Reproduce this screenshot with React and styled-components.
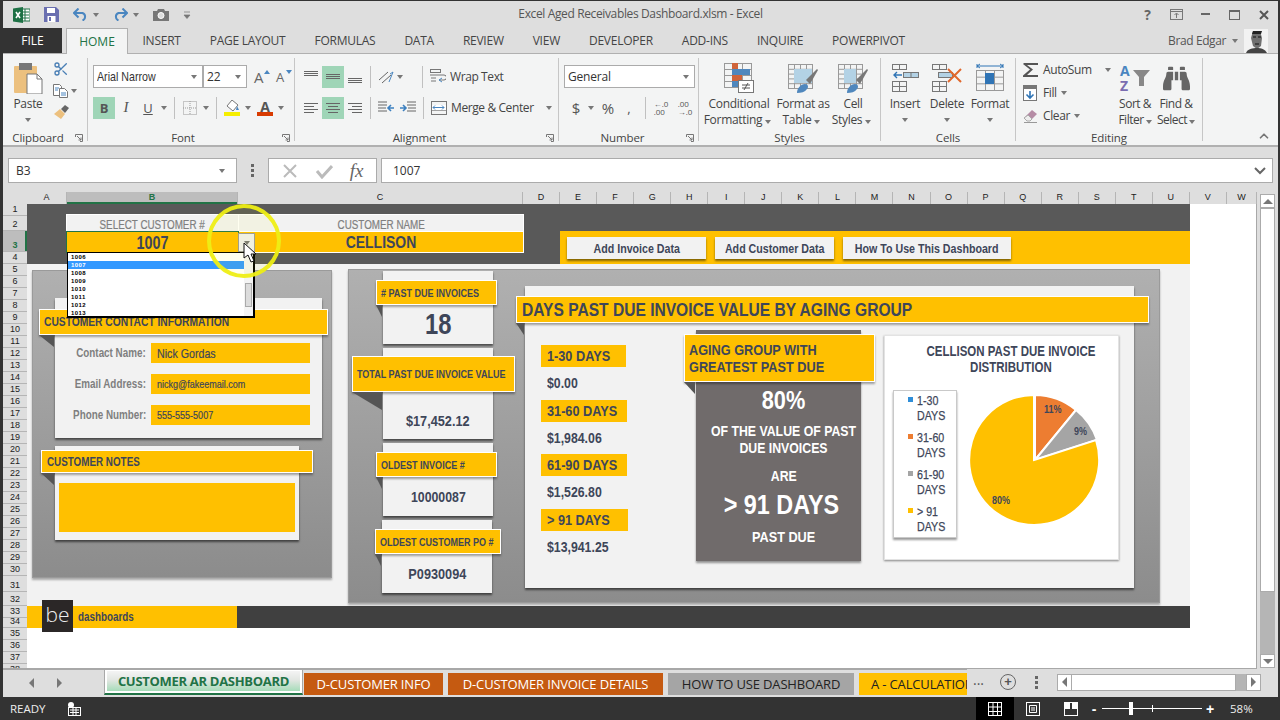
import React from 'react'
import styled, { createGlobalStyle } from 'styled-components'
import { Scissors, ChevronUp } from 'lucide-react'
import { FaBinoculars } from 'react-icons/fa'

const UI = `"Open Sans", "Noto Sans", sans-serif`
const SANS = `"Liberation Sans", Arial, sans-serif`
const AMBER = '#FFC000'
const INK = '#3E4659'

const Global = createGlobalStyle`
  html, body { margin: 0; padding: 0; background: #333; }
  * { box-sizing: border-box; }
`

// Arial Narrow is not installed, so squeeze Liberation Sans to its width
const N = styled.span`
  display: inline-block; white-space: nowrap; transform: scaleX(0.82);
  transform-origin: ${p => p.$o || 'left'} center;
`

const Win = styled.div`
  width: 1280px; height: 720px; overflow: hidden;
  background: #dedede; display: flex; flex-direction: column;
  border-top: 1px solid #333; border-left: 3px solid #333; border-right: 2px solid #333;
  font-family: ${UI}; color: #444;
`
const TitleBar = styled.div`
  height: 27px; display: grid; grid-template-columns: 1fr auto 1fr; align-items: center;
`
const Qat = styled.div`display: flex; align-items: center; gap: 14px; padding-left: 10px;`
const QatPair = styled.div`display: flex; align-items: center; gap: 5px;`
const Title = styled.div`font-size: 12px; color: #555; letter-spacing: -0.37px; padding-bottom: 2px;`
const WinBtns = styled.div`display: flex; justify-content: flex-end;`
const WinBtn = styled.div`width: 29px; height: 27px; display: flex; align-items: center; justify-content: center; color: #666; font-weight: 700; font-size: 14px;`

const Tabs = styled.div`display: flex; height: 25px; align-items: stretch; position: relative; z-index: 1;`
const FileTab = styled.div`width: 59px; margin-right: 4px; background: #333; color: #fff; font-size: 12px; display: flex; align-items: center; justify-content: center;`
const HomeTab = styled.div`
  width: 62px; margin-bottom: -1px; background: #f3f4f4; color: #217346; font-size: 12px;
  border: 1px solid #b0b0b0; border-bottom: 0; display: flex; align-items: center; justify-content: center;
`
const Tab = styled.div`padding: 0 14.5px; font-size: 12px; letter-spacing: -0.25px; display: flex; align-items: center; color: #444;`
const User = styled.div`margin-left: auto; display: flex; align-items: center; padding-right: 10px; font-size: 12px; letter-spacing: -0.4px; gap: 6px; color: #555;`
const Avatar = styled.svg`width: 24px; height: 24px; display: block;`

const Ribbon = styled.div`
  height: 94px; display: flex; background: #f3f4f4;
  border-top: 1px solid #b0b0b0; border-bottom: 2px solid #b0b0b0; position: relative;
`
const Group = styled.div`
  width: ${p => p.$w}px; flex: none; margin: 4px 0 4px; display: flex; flex-direction: column;
  border-right: 1px solid #c6c6c6; position: relative;
`
const GroupBody = styled.div`flex: 1; display: flex; min-height: 0; padding-left: ${p => p.$pl || 0}px;`
const GroupLabel = styled.div`height: 18px; margin-bottom: -6px; text-align: center; font-size: 11.5px; color: #444; line-height: 18px; letter-spacing: -0.1px; padding-right: ${p => p.$pr || 0}px;`
const Launcher = styled.svg`position: absolute; right: 4px; bottom: -1px; width: 8px; height: 8px;`
const Collapse = styled.div`position: absolute; right: 7px; bottom: 2px; color: #777; line-height: 0;`
const Stack = styled.div`display: flex; flex-direction: column; gap: ${p => p.$gap ?? 8}px; padding: ${p => p.$pad || '7px 0 0 5px'}; width: ${p => (p.$w ? `${p.$w}px` : 'auto')}; flex: none;`
const Line = styled.div`display: flex; align-items: center; height: 23px; flex: none;`
const Btn = styled.div`
  width: ${p => p.$w || 22}px; height: 22px; flex: none; display: flex; align-items: center; justify-content: center;
  margin-left: ${p => p.$ml || 0}px;
  background: ${p => (p.$on ? '#9fd5b7' : 'transparent')}; font-size: ${p => p.$fs || 13}px; line-height: ${p => p.$lh || 'normal'}; color: #555;
`
const SerifI = styled.i`font-family: "Liberation Serif", serif; font-size: 15px;`
const Caret = styled.span`
  display: inline-block; flex: none; width: 0; height: 0; margin: ${p => p.$m || '0 3px'};
  border-left: 3.5px solid transparent; border-right: 3.5px solid transparent; border-top: 4px solid #777;
`
const VSep = styled.div`width: 1px; height: 22px; background: #c0c0c0; margin: 0 ${p => p.$r ?? 7}px 0 ${p => p.$l ?? 7}px; flex: none;`
const Select = styled.div`
  width: ${p => p.$w}px; height: 23px; background: #fff; border: 1px solid #ababab; margin-right: ${p => p.$mr || 0}px; flex: none;
  display: flex; align-items: center; justify-content: space-between; padding: 0 2px 0 3px; font-size: 12px; color: #333; letter-spacing: -0.2px;
`
const SelectFace = styled.span`font-family: ${SANS}; font-size: 13px; letter-spacing: 0; display: inline-block; white-space: nowrap; transform: scaleX(0.82); transform-origin: left center;`
const Big = styled.div`
  width: ${p => p.$w}px; flex: none; display: flex; flex-direction: column; align-items: center; padding-top: 4px; white-space: nowrap;
  font-size: 12px; line-height: 16px; color: #444; letter-spacing: ${p => p.$ls ?? -0.3}px; text-align: center;
`
const BigIcon = styled.div`height: 32px; margin-bottom: 2px; display: flex; align-items: center; justify-content: center;`
const WideRow = styled.div`display: flex; align-items: center; gap: 4px; font-size: 12px; letter-spacing: -0.4px; height: 23px; white-space: nowrap; flex: none;`
const CopyRow = styled.div`display: flex; align-items: center;`

const FormulaRow = styled.div`display: flex; align-items: center; height: 25px; margin: 11px 0 9px 5px;`
const NameBox = styled.div`width: 229px; height: 25px; background: #fff; border: 1px solid #ababab; display: flex; align-items: center; justify-content: space-between; padding: 0 8px 0 7px; font-size: 12px; color: #333;`
const BarDots = styled.div`width: 31px; display: flex; justify-content: center;`
const FxBox = styled.div`width: 109px; height: 25px; background: #fff; border: 1px solid #ababab; display: flex; align-items: center; justify-content: space-around; padding: 0 4px;`
const Fx = styled.span`font-family: "Liberation Serif", serif; font-style: italic; font-size: 19px; color: #666;`
const Input = styled.div`flex: 1; margin: 0 5px 0 4px; height: 25px; background: #fff; border: 1px solid #ababab; display: flex; align-items: center; justify-content: space-between; padding: 0 6px 0 11px; font-size: 12px; color: #333;`

const SheetWrap = styled.div`flex: 1; display: flex; min-height: 0;`
const SheetMain = styled.div`width: 1254px; display: flex; flex-direction: column; border-right: 1px solid #a8a8a8; border-bottom: 1px solid #a8a8a8;`
const ColHead = styled.div`display: flex; height: 12px; background: #dedede; flex: none;`
const Corner = styled.div`width: 24px; flex: none;`
const Col = styled.div`
  width: ${p => p.$w}px; flex: none; border-right: 1px solid #b5b5b5; font: ${p => (p.$on ? 'bold' : 'normal')} 9px/11px ${SANS};
  text-align: center; color: ${p => (p.$on ? '#217346' : '#222')}; background: ${p => (p.$on ? '#bdbdbd' : 'transparent')};
  box-shadow: ${p => (p.$on ? 'inset 0 -2px 0 #217346' : 'none')}; overflow: hidden;
`
const SheetBody = styled.div`flex: 1; display: flex; min-height: 0; overflow: hidden;`
const RowHead = styled.div`width: 24px; flex: none; background: #dedede; overflow: hidden;`
const RowNum = styled.div`
  height: ${p => p.$h}px; border-bottom: 1px solid #b5b5b5; font: ${p => (p.$on ? 'bold' : 'normal')} 9px/11px ${SANS};
  display: flex; align-items: flex-end; justify-content: center; color: ${p => (p.$on ? '#217346' : '#222')}; background: ${p => (p.$on ? '#bdbdbd' : 'transparent')};
  box-shadow: ${p => (p.$on ? 'inset -2px 0 0 #217346' : 'none')};
`
const Canvas = styled.div`flex: 1; background: #fff; overflow: hidden;`
const Dash = styled.div`width: 1163px; font-family: ${SANS}; font-weight: 700; color: ${INK};`

const Band = styled.div`height: 60px; background: #595959; display: flex; align-items: flex-end;`
const Selector = styled.div`
  width: 458px; height: 39px; margin: 0 0 11px 39px; flex: none; position: relative; align-self: flex-end;
  background: #fff; padding: 1px; display: grid; grid-template-columns: 171px 1fr; grid-template-rows: 16px 20px; gap: 1px;
`
const SelLabel = styled.div`background: #f2f2f2; color: #7f7f7f; font-size: 12px; text-align: center; line-height: 20px; height: 16px; font-weight: 400; -webkit-text-stroke: 0.2px #7f7f7f;`
const SelValue = styled.div`background: ${AMBER}; font-size: ${p => p.$fs}px; line-height: 22px; height: 20px; text-align: center; position: relative; box-shadow: ${p => (p.$sel ? '0 0 0 1px #217346' : 'none')};`
const DropBtn = styled.div`position: absolute; left: 172px; top: 19px; width: 17px; height: 19px; background: #f0f0f0; border: 1px solid #999; display: flex; align-items: center; justify-content: center;`
const Drop = styled.div`position: absolute; left: 1px; top: 38px; width: 188px; height: 66px; background: #fff; border: 1px solid #000; border-width: 1px 2px 2px 1px; z-index: 5; overflow: hidden;`
const DropItem = styled.div`height: 8px; font: bold 6px/8px ${SANS}; letter-spacing: 0.4px; padding-left: 3px; margin-right: 9px; color: ${p => (p.$on ? '#fff' : '#000')}; background: ${p => (p.$on ? '#3399ff' : '#fff')};`
const DropBar = styled.div`position: absolute; right: 0; top: 0; bottom: 0; width: 9px; background: #f4f4f4;`
const DropThumb = styled.div`position: absolute; left: 1px; top: 30px; width: 7px; height: 24px; background: #dcdcdc; border: 1px solid #aaa;`
const Ring = styled.div`position: absolute; left: 141px; top: -10px; width: 74px; height: 74px; border-radius: 50%; border: 4px solid rgba(238,238,20,0.95); background: rgba(255,255,0,0.06); z-index: 6; pointer-events: none;`
const Pointer = styled.svg`position: absolute; left: 177px; top: 28px; width: 15px; height: 22px; z-index: 7;`

const Strip = styled.div`flex: 1; height: 33px; margin-left: 36px; background: ${AMBER}; display: flex; gap: 9px; padding: 6px 0 0 7px; align-items: flex-start;`
const StripBtn = styled.div`width: ${p => p.$w}px; height: 22px; background: #f2f2f2; box-shadow: 0 2px 2px rgba(90,70,0,.75); font-size: 13px; display: flex; align-items: center; justify-content: center;`

const Page = styled.div`height: 342px; background: #f2f2f2; display: flex; align-items: flex-start; padding-left: 5px;`
const Panel = styled.div`
  width: ${p => p.$w}px; height: ${p => p.$h}px; margin: ${p => p.$m}; flex: none;
  background: linear-gradient(#b0b0b0, #8c8c8c); border: 1px solid #9a9a9a; box-shadow: 0 2px 2px rgba(0,0,0,.3);
`
const LeftPanel = styled(Panel)`padding: 27px 0 0 22px; display: flex; flex-direction: column; gap: 8px;`
const RightPanel = styled(Panel)`padding: 1px 0 0 34px; display: flex;`
const Card = styled.div`
  width: ${p => p.$w}px; height: ${p => p.$h}px; background: ${p => p.$bg || '#f2f2f2'}; flex: none; margin-left: ${p => p.$ml || 0}px;
  padding-top: ${p => p.$pt}px; display: flex; flex-direction: column; box-shadow: 0 2px 2px rgba(0,0,0,.55);
`
const Callout = styled.div`
  height: ${p => p.$h}px; margin: 0 -${p => p.$r}px 0 -${p => p.$l}px; flex: none; position: relative; z-index: 2; color: ${INK};
  background: ${AMBER}; border: 1px solid #fff; box-shadow: 0 2px 2px rgba(0,0,0,.35); text-align: left;
  display: flex; align-items: center; padding-left: ${p => p.$pl || 4}px; font-size: ${p => p.$fs}px; line-height: ${p => p.$lh || 'normal'};
  &::after {
    content: ''; position: absolute; left: -1px; top: 100%; margin-top: 1px; width: 0; height: 0;
    border-top: ${p => p.$fold || 12}px solid #555; border-left: ${p => p.$l - 1}px solid transparent;
  }
`
const Fields = styled.div`display: flex; flex-direction: column; gap: 11px; padding-top: 8px;`
const Field = styled.div`display: flex; align-items: center;`
const FieldLabel = styled.div`width: 96px; padding-right: 5px; text-align: right; font-size: 12px; color: #7f7f7f; white-space: nowrap;`
const FieldValue = styled.div`width: 159px; height: 20px; background: ${AMBER}; padding-left: 6px; font-size: ${p => p.$fs || 12}px; line-height: 21px; font-weight: 400; -webkit-text-stroke: 0.2px ${INK};`
const NotesBox = styled.div`height: 49px; margin: 10px 4px 0; background: ${AMBER};`

const KpiCol = styled.div`width: 110px; flex: none; display: flex; flex-direction: column; gap: 4px;`
const KpiValue = styled.div`flex: 1; display: flex; align-items: center; justify-content: center; font-size: ${p => p.$fs}px; padding: ${p => p.$pad || 0};`

const Main = styled(Card)`margin: 15px 0 0 32px;`
const MainBody = styled.div`display: flex; align-items: flex-start; flex: 1;`
const DaysCol = styled.div`width: 171px; padding: 22px 0 0 16px; flex: none;`
const DayRow = styled.div`height: 54.6px;`
const DayChip = styled.div`width: ${p => p.$w}px; height: 22px; background: ${AMBER}; padding-left: 6px; font-size: 15.5px; line-height: 22px;`
const DayVal = styled.div`padding: 7px 0 0 6px; font-size: 15px; line-height: 17px;`
const GrayPanel = styled.div`width: 165px; height: 231px; margin-top: 7px; padding-top: 4px; background: #706b6b; flex: none; box-shadow: 0 2px 2px rgba(0,0,0,.4); display: flex; flex-direction: column; color: #fff;`
const GrayText = styled.div`display: flex; flex-direction: column; align-items: center; text-align: center; padding-left: 10px;`
const GrayLine = styled.div`width: max-content; font-size: ${p => p.$fs}px; line-height: ${p => p.$lh}px; margin-top: ${p => p.$mt || 0}px; margin-right: ${p => p.$mr || 0}px;`
const Chart = styled.div`width: 235px; height: 225px; margin: 12px 0 0 23px; flex: none; background: #fff; border: 1px solid #e3e3e3; box-shadow: 0 1px 2px rgba(0,0,0,.45);`
const ChartTitle = styled.div`font-size: 14px; line-height: 16px; text-align: center; padding: 7px 0 0 18px;`
const ChartBody = styled.div`display: flex; padding: 15px 0 0 8px;`
const Legend = styled.div`width: 64px; height: 148px; flex: none; border: 1px solid #c9c9c9; box-shadow: 0 2px 2px rgba(0,0,0,.4); padding: 2px 0 0 14px; display: flex; flex-direction: column; gap: 7px;`
const LegendItem = styled.div`display: flex; gap: 4px; font-size: 13px; line-height: 15px; font-weight: 400; -webkit-text-stroke: 0.25px ${INK};`
const Swatch = styled.i`width: 5px; height: 5px; margin-top: 4px; flex: none; background: ${p => p.$c};`
const Pie = styled.svg`width: 140px; height: 140px; margin: 0 0 0 7px; flex: none; display: block;`
const PieLabel = styled.text`font-family: ${SANS}; font-size: 11px; font-weight: 700; fill: ${INK};`

const Footer = styled.div`height: 22px; background: #404040; display: flex;`
const FootAmber = styled.div`width: 210px; background: ${AMBER}; display: flex; align-items: center; padding-left: 15px; overflow: visible;`
const BeLogo = styled.div`width: 31px; height: 32px; margin-top: -6px; margin-bottom: -4px; background: #2b2727; color: #eee; font: 300 21px/28px "Open Sans", sans-serif; text-align: center; flex: none; position: relative;`
const FootText = styled.div`margin-left: 5px; font-size: 12px;`

const VScroll = styled.div`width: 21px; flex: none; padding: 2px 3px 1px 3px; display: flex; flex-direction: column;`
const ScrollBtn = styled.div`height: 14px; flex: none; background: #fff; border: 1px solid #ababab; display: flex; align-items: center; justify-content: center;`
const ScrollThumb = styled.div`flex: 1; background: #fff; border: 1px solid #ababab;`
const ScrollRest = styled.div`height: 62px; flex: none; background: #b5b5b5;`
const Tri = styled.span`
  width: 0; height: 0; display: block;
  ${p => p.$dir === 'up' && 'border-left:5px solid transparent;border-right:5px solid transparent;border-bottom:5px solid #777;'}
  ${p => p.$dir === 'down' && 'border-left:5px solid transparent;border-right:5px solid transparent;border-top:5px solid #777;'}
  ${p => p.$dir === 'left' && 'border-top:5px solid transparent;border-bottom:5px solid transparent;border-right:5px solid #777;'}
  ${p => p.$dir === 'right' && 'border-top:5px solid transparent;border-bottom:5px solid transparent;border-left:5px solid #777;'}
`

const TabBar = styled.div`height: 28px; flex: none; display: flex; align-items: flex-start; font-size: 13px;`
const TabNav = styled.div`width: 101px; height: 26px; flex: none; display: flex; gap: 23px; align-items: center; padding-left: 26px; border-top: 1px solid #a8a8a8;`
const ActiveTab = styled.div`
  width: 199px; height: 26px; flex: none; background: #fff; border: 1px solid #a8a8a8; border-bottom: 2px solid #217346; border-top-width: 1px; padding: 1px 2px 2px 2px;
`
const ActiveInner = styled.div`
  height: 100%; background: linear-gradient(#f4f4f4 0%, #e2e6e2 45%, #a6dcb9 100%); color: #217346; font-weight: 700; font-size: 13px;
  display: flex; align-items: center; justify-content: center; letter-spacing: -0.3px;
`
const SheetTabs = styled.div`display: flex; flex: none; gap: 5px; padding: 3px 0 0 1px; border-top: 1px solid #a8a8a8; height: 26px;`
const SheetTab = styled.div`
  width: ${p => p.$w}px; height: 22px; background: ${p => p.$bg}; color: ${p => p.$fg}; overflow: hidden; white-space: nowrap;
  padding-left: ${p => p.$pl || 0}px; display: flex; align-items: center; justify-content: ${p => (p.$pl ? 'flex-start' : 'center')}; letter-spacing: -0.15px;
`
const TabTail = styled.div`flex: 1; display: flex; align-items: center; height: 26px; color: #555;`
const More = styled.div`width: 28px; padding-left: 6px; font-size: 14px; line-height: 16px; height: 20px;`
const Plus = styled.div`width: 16px; height: 16px; margin: 0 0 0 5px; border: 1.5px solid #666; border-radius: 50%; color: #555; font: 700 13px/13px ${SANS}; text-align: center;`
const TabDots = styled.div`width: 40px; display: flex; justify-content: center;`
const HScroll = styled.div`width: 204px; height: 17px; display: flex; margin-left: 1px;`
const HBtn = styled.div`width: 15px; background: #fff; border: 1px solid #ababab; display: flex; align-items: center; justify-content: center;`
const HThumb = styled.div`flex: 1; background: #fff; border: 1px solid #ababab; border-left: 0;`
const HRest = styled.div`width: 10px; background: #b5b5b5;`

const Status = styled.div`height: 23px; flex: none; background: #333; margin-left: -3px; margin-right: -2px; display: flex; align-items: center; color: #eee; font-size: 11.5px; padding-left: 10px;`
const Macro = styled.svg`width: 14px; height: 14px; margin-left: 21px;`
const StatusRight = styled.div`margin-left: auto; display: flex; align-items: center; height: 100%;`
const ViewBtn = styled.div`width: 38px; height: 100%; display: flex; align-items: center; justify-content: center; background: ${p => (p.$on ? '#000' : 'transparent')};`
const ZoomSign = styled.span`font: bold 14px ${SANS}; color: #fff; width: 8px; text-align: center;`
const Slider = styled.div`width: 100px; height: 1px; background: #fff; margin: 0 4px; position: relative;`
const SliderThumb = styled.i`position: absolute; left: 27px; top: -6px; width: 4px; height: 13px; background: #fff;`
const SliderTick = styled.i`position: absolute; left: 50px; top: -3px; width: 1px; height: 7px; background: #fff;`
const ZoomPct = styled.div`width: 66px; padding-left: 16px; color: #eee; font-size: 11.5px;`

// ---- drawings ----
const Cells = ({ x, y, w, h, cols = 1, rows = 1, s = '#777' }) => {
  const out = [<rect key="b" x={x + 0.5} y={y + 0.5} width={w} height={h} fill="none" stroke={s} />]
  for (let i = 1; i < cols; i++) out.push(<path key={'c' + i} d={`M${x + 0.5 + (i * w) / cols} ${y}v${h}`} stroke={s} />)
  for (let i = 1; i < rows; i++) out.push(<path key={'r' + i} d={`M${x} ${y + 0.5 + (i * h) / rows}h${w}`} stroke={s} />)
  return <>{out}</>
}
const IcoSvg = styled.svg`display: block; flex: none; transform: ${p => (p.$flip ? 'scaleX(-1)' : 'none')};`
const Ico = ({ w = 16, h = 16, flip, children }) => <IcoSvg $flip={flip} width={w} height={h} viewBox={`0 0 ${w} ${h}`}>{children}</IcoSvg>

const VDots = () => (
  <Ico w={3} h={13}><rect width="3" height="3" fill="#666" /><rect y="5" width="3" height="3" fill="#666" /><rect y="10" width="3" height="3" fill="#666" /></Ico>
)
const LogoIcon = () => (
  <Ico w={17} h={16}>
    <rect x="6" y="2" width="11" height="12" fill="#fff" stroke="#1e7145" />
    <path d="M9 5h7M9 8h7M9 11h7M12 2v12" stroke="#1e7145" />
    <path d="M0 1.500 10 0v16L0 14.500z" fill="#1e7145" />
    <path d="M3 5l4 6M7 5l-4 6" stroke="#fff" strokeWidth="1.6" />
  </Ico>
)
const SaveIcon = () => (
  <Ico w={15} h={15}>
    <path d="M0 0h12l3 3v12H0z" fill="#6a6fb0" />
    <rect x="3" y="1" width="8" height="5" fill="#fff" />
    <rect x="3.5" y="9" width="8" height="6" fill="#fff" />
    <rect x="5" y="10" width="2" height="4" fill="#6a6fb0" />
  </Ico>
)
const UndoIcon = ({ flip }) => (
  <Ico w={15} h={13} flip={flip}>
    <path d="M1.500 5h8a4 4 0 0 1 0 7.500" fill="none" stroke="#4a86c0" strokeWidth="2" />
    <path d="M5.500 .5 1 5l4.500 4.500" fill="none" stroke="#4a86c0" strokeWidth="2" />
  </Ico>
)
const CameraIcon = () => (
  <Ico w={16} h={13}>
    <path d="M0 3h4l1-2h6l1 2h4v10H0z" fill="#777" />
    <circle cx="8" cy="7.5" r="3" fill="#ddd" stroke="#fff" />
  </Ico>
)
const PasteIcon = () => (
  <Ico w={30} h={32}>
    <rect x="1" y="4" width="23" height="27" rx="1" fill="#ecc07e" />
    <rect x="6" y="1" width="13" height="7" fill="#777" />
    <path d="M14 12h10l5 5v15H14z" fill="#fff" stroke="#777" />
    <path d="M24 12v5h5" fill="none" stroke="#777" />
  </Ico>
)
const CopyIcon = () => (
  <Ico w={15} h={14}>
    <path d="M.5.5h6l2 2v9h-8z" fill="#fff" stroke="#777" />
    <path d="M6.500 4.500h5l3 3v6h-8z" fill="#fff" stroke="#777" />
    <path d="M2 4h4M2 6h3M8 9h5M8 11h5" stroke="#4a86c0" />
  </Ico>
)
const BrushIcon = () => (
  <Ico w={16} h={14}>
    <path d="M1 9 7 4l5 5-4 5z" fill="#ecc07e" />
    <path d="M8 4l4-4 4 3-4 5z" fill="#666" />
  </Ico>
)
const LinesIcon = ({ rows }) => (
  <Ico w={14} h={14}>
    {rows.map(([y, x, len], i) => <path key={i} d={`M${x} ${y}.5h${len}`} stroke="#666" />)}
  </Ico>
)
const FontGlyph = styled.span`position: relative; display: block; width: 16px; height: 16px; font-size: ${p => p.$fs}px; line-height: 17px; color: #666;`
const FontArrow = styled.svg`position: absolute; right: 0; top: 1px;`
const FontUp = ({ up }) => (
  <FontGlyph $fs={up ? 15 : 13}>
    A
    <FontArrow width="6" height="4" viewBox="0 0 6 4"><path d={up ? 'M0 4 3 0l3 4z' : 'M0 0l3 4 3-4z'} fill="#4a86c0" /></FontArrow>
  </FontGlyph>
)
const BordersIcon = () => (
  <Ico w={14} h={14}><rect x=".5" y=".5" width="13" height="13" fill="none" stroke="#999" strokeDasharray="1 1" /><path d="M7 0v14M0 7h14" stroke="#999" strokeDasharray="1 1" /></Ico>
)
const FillIcon = () => (
  <Ico w={16} h={16}>
    <path d="M8 0l6 5-5 6-6-5z" fill="#fff" stroke="#777" />
    <path d="M13 6l2 4h-3z" fill="#4a86c0" />
    <rect y="12" width="16" height="4" fill="#f5ee00" />
  </Ico>
)
const ColorGlyph = styled.span`position: relative; display: block; width: 16px; height: 16px; text-align: center; font: bold 14px/13px ${UI}; color: #555;`
const ColorBar = styled.i`position: absolute; left: 0; bottom: 0; width: 16px; height: 4px; background: #d83b01;`
const FontColorIcon = () => <ColorGlyph>A<ColorBar /></ColorGlyph>
const OrientIcon = () => (
  <Ico w={16} h={16}><path d="M1 11 10 3M4 14l9-8" stroke="#666" /><path d="M11 13 15 3l-3 2" fill="none" stroke="#4a86c0" /></Ico>
)
const IndentIcon = ({ flip }) => (
  <Ico w={16} h={13} flip={flip}>
    <path d="M7 1h9M7 4h9M8 7h8M7 10h9" stroke="#666" />
    <path d="M0 7h5M3 4l3 3-3 3" fill="none" stroke="#3d80c0" strokeWidth="1.6" />
  </Ico>
)
const WrapIcon = () => (
  <Ico w={16} h={15}><rect x=".5" y=".5" width="10" height="3" fill="none" stroke="#777" /><path d="M0 6h14a2 2 0 0 1 0 5H9" fill="none" stroke="#777" /><path d="M1 9h5M1 12h5" stroke="#777" /><path d="M12 9l-3 2 3 2" fill="none" stroke="#4a86c0" /></Ico>
)
const MergeIcon = () => (
  <Ico w={16} h={14}><Cells x={0} y={0} w={15} h={13} rows={3} /><rect x="1" y="4" width="14" height="5" fill="#fff" /><path d="M2 6.500h11M4 4.500l-2 2 2 2M11 4.500l2 2-2 2" fill="none" stroke="#4a86c0" /></Ico>
)
const CondIcon = () => (
  <Ico w={30} h={30}>
    <Cells x={0} y={0} w={27} h={24} cols={3} rows={4} s="#999" />
    <rect x="8" y="0" width="6" height="6" fill="#d0643a" />
    <rect x="8" y="6" width="18" height="6" fill="#4f87bd" />
    <rect x="8" y="12" width="10" height="6" fill="#d0643a" />
    <rect x="8" y="18" width="6" height="6" fill="#4f87bd" />
    <rect x="14.5" y="17.5" width="15" height="12" fill="#fff" stroke="#777" />
    <path d="M18 22h8M18 25h8M24 20l-4 7" stroke="#555" />
  </Ico>
)
const TableIcon = ({ styleOnly }) => (
  <Ico w={30} h={30}>
    <Cells x={0} y={1} w={24} h={24} cols={4} rows={5} s="#999" />
    <rect x="6" y="6" width={styleOnly ? 12 : 18} height="14" fill="#b3d2e5" />
    <path d="M18 17 29 6l1 1-8 14z" fill="#777" />
    <path d="M9 30c0-5 4-9 8-9 3 0 4 3 2 5-2 3-6 4-10 4z" fill="#4f87bd" />
  </Ico>
)
const InsertIcon = () => (
  <Ico w={27} h={28}>
    <Cells x={0} y={0} w={14} h={5} cols={2} />
    <rect x="11.5" y="8.5" width="15" height="5" fill="#b3d2e5" stroke="#777" /><path d="M19 8v6" stroke="#777" />
    <path d="M2 11h8M5 8l-3 3 3 3" fill="none" stroke="#2f74b5" strokeWidth="1.4" />
    <Cells x={0} y={17} w={14} h={10} cols={2} rows={2} />
  </Ico>
)
const DeleteIcon = () => (
  <Ico w={30} h={28}>
    <Cells x={0} y={0} w={14} h={5} cols={2} />
    <rect x="6.5" y="8.5" width="14" height="5" fill="#b3d2e5" stroke="#777" />
    <Cells x={0} y={17} w={14} h={10} cols={2} rows={2} />
    <path d="M16 5l13 13M29 5 16 18" stroke="#e0682c" strokeWidth="2" />
  </Ico>
)
const FormatIcon = () => (
  <Ico w={28} h={30}>
    <path d="M1 3h26M1 1v4M27 1v4M4 1 1 3l3 2M24 1l3 2-3 2" fill="none" stroke="#2f74b5" />
    <Cells x={0} y={7} w={27} h={20} cols={3} rows={3} s="#999" />
    <rect x="9" y="10" width="9" height="11" fill="#2f74b5" />
  </Ico>
)
const SigmaIcon = () => (
  <Ico w={16} h={15}><path d="M1 1h14v2H4l6 4.500L4 13h11v2H0v-1.500L7 7.500 0 2z" fill="#555" /></Ico>
)
const FillDownIcon = () => (
  <Ico w={16} h={16}><rect x=".5" y=".5" width="13" height="15" fill="#fff" stroke="#777" /><rect width="14" height="4" fill="#777" /><path d="M7 6v7M3.500 9.500 7 13l3.500-3.500" fill="none" stroke="#2f74b5" strokeWidth="1.6" /></Ico>
)
const EraserIcon = () => (
  <Ico w={16} h={14}><path d="M1 9 9 1l5 4-7 7H4z" fill="#b58ca5" /><path d="M1 9l3 3h3l2-2-4-4z" fill="#eee" stroke="#aaa" /><path d="M1 13.500h13" stroke="#999" /></Ico>
)
const SortGlyph = styled.span`position: relative; display: block; width: 30px; height: 30px; font: 700 14px/13px ${UI};`
const SortA = styled.span`position: absolute; left: 0; top: 1px; color: #4a86c0;`
const SortZ = styled.span`position: absolute; left: 0; top: 16px; color: #7a6cb0;`
const SortFunnel = styled.svg`position: absolute; left: 13px; top: 7px;`
const SortIcon = () => (
  <SortGlyph>
    <SortA>A</SortA>
    <SortZ>Z</SortZ>
    <SortFunnel width="17" height="16" viewBox="0 0 17 16"><path d="M0 0h17l-6 7v9H6V7z" fill="#888" /></SortFunnel>
  </SortGlyph>
)
const Face = () => (
  <Avatar viewBox="0 0 24 24">
    <rect width="24" height="24" fill="#f2f2f2" />
    <path d="M9 2h7l2 7-1 8-4 3-4-3-2-8z" fill="#6f6f6f" />
    <path d="M8 5h9l1-3H9z" fill="#222" />
    <path d="M9 8h3M14 8h3M11 15h4" stroke="#111" />
    <path d="M2 24c1-4 7-5 11-5s8 1 10 5z" fill="#444" />
  </Avatar>
)
const Launch = () => (
  <Launcher viewBox="0 0 8 8"><path d="M.5 3V.5H7.500V7.500H5M2 2l4 4M6 3.500V6H3.500" fill="none" stroke="#777" /></Launcher>
)

// ---- data ----
const cols = [
  ['A', 40], ['B', 171, true], ['C', 285],
  ...'DEFGHIJKLMNOPQRSTUV'.split('').map(c => [c, 37.05]), ['W', 30],
]
const rows = [12, 15, 21, 12, ...Array(26).fill(12), 16, 14, 12, 10, 12, 12, 12, 12]
const tabNames = ['INSERT', 'PAGE LAYOUT', 'FORMULAS', 'DATA', 'REVIEW', 'VIEW', 'DEVELOPER', 'ADD-INS', 'INQUIRE', 'POWERPIVOT']
const fields = [
  ['Contact Name:', 'Nick Gordas', 13],
  ['Email Address:', 'nickg@fakeemail.com', 11],
  ['Phone Number:', '555-555-5007', 11],
]
const kpis = [
  { label: '# PAST DUE INVOICES', value: '18', h: 73, pt: 9, ch: 25, l: 7, r: 4, fs: 29, ml: 0, fold: 12 },
  { label: 'TOTAL PAST DUE INVOICE VALUE', value: '$17,452.12', h: 91, pt: 8, ch: 36, l: 31, r: 22, fs: 15.5, ml: 0, fold: 18, pad: '10px 0 0' },
  { label: 'OLDEST INVOICE #', value: '10000087', h: 73, pt: 9, ch: 25, l: 7, r: 4, fs: 15, ml: 0, fold: 12 },
  { label: 'OLDEST CUSTOMER PO #', value: 'P0930094', h: 73, pt: 9, ch: 25, l: 7, r: 9, fs: 15.5, ml: -1, fold: 12 },
]
const days = [
  ['1-30 DAYS', '$0.00', 85], ['31-60 DAYS', '$1,984.06', 86],
  ['61-90 DAYS', '$1,526.80', 86], ['> 91 DAYS', '$13,941.25', 87],
]
const legend = [
  ['#2f8ed8', '1-30'], ['#ED7D31', '31-60'], ['#A5A5A5', '61-90'], [AMBER, '> 91'],
]

export default function App() {
  return (
    <>
      <Global />
      <Win>
        <TitleBar>
          <Qat>
            <LogoIcon />
            <SaveIcon />
            <QatPair><UndoIcon /><Caret $m="0" /></QatPair>
            <QatPair><UndoIcon flip /><Caret $m="0" /></QatPair>
            <CameraIcon />
            <Ico w={8} h={8}><path d="M1 1h6M1 4h6l-3 3.500z" fill="#777" stroke="#777" strokeWidth=".7" /></Ico>
          </Qat>
          <Title>Excel Aged Receivables Dashboard.xlsm - Excel</Title>
          <WinBtns>
            <WinBtn>?</WinBtn>
            <WinBtn><Ico w={13} h={11}><rect x=".5" y=".5" width="12" height="10" fill="none" stroke="#777" /><path d="M0 2.500h13M6.500 9V4.500M4.500 6l2-2 2 2" fill="none" stroke="#777" /></Ico></WinBtn>
            <WinBtn><Ico w={9} h={3}><rect width="9" height="2" fill="#666" /></Ico></WinBtn>
            <WinBtn><Ico w={11} h={10}><rect x=".5" y="1" width="10" height="8.5" fill="none" stroke="#666" /><rect x="0" y="0" width="11" height="2" fill="#666" /></Ico></WinBtn>
            <WinBtn><Ico w={10} h={10}><path d="M1 1l8 8M9 1 1 9" stroke="#555" strokeWidth="2" /></Ico></WinBtn>
          </WinBtns>
        </TitleBar>

        <Tabs>
          <FileTab>FILE</FileTab>
          <HomeTab>HOME</HomeTab>
          {tabNames.map(t => <Tab key={t}>{t}</Tab>)}
          <User>Brad Edgar<Caret $m="0" /><Face /></User>
        </Tabs>

        <Ribbon>
          <Group $w={85}>
            <GroupBody>
              <Big $w={50}>
                <BigIcon><PasteIcon /></BigIcon>
                Paste
                <Caret $m="6px 0 0" />
              </Big>
              <Stack $gap={7} $pad="3px 0 0 0">
                <Scissors size={16} color="#4a7fb5" />
                <CopyRow><CopyIcon /><Caret $m="0 0 0 3px" /></CopyRow>
                <BrushIcon />
              </Stack>
            </GroupBody>
            <GroupLabel $pr={14}>Clipboard</GroupLabel>
            <Launch />
          </Group>

          <Group $w={207}>
            <GroupBody>
              <Stack>
                <Line>
                  <Select $w={110}><SelectFace>Arial Narrow</SelectFace><Caret /></Select>
                  <Select $w={44} $mr={4}>22<Caret /></Select>
                  <Btn><FontUp up /></Btn>
                  <Btn><FontUp /></Btn>
                </Line>
                <Line>
                  <Btn $on><b>B</b></Btn>
                  <Btn><SerifI>I</SerifI></Btn>
                  <Btn><u>U</u></Btn>
                  <Caret $m="0 0 0 1.5px" />
                  <VSep $l={7.5} $r={7} />
                  <Btn $w={16}><BordersIcon /></Btn>
                  <Caret $m="0 0 0 5px" />
                  <VSep />
                  <Btn $w={16}><FillIcon /></Btn>
                  <Caret $m="0 0 0 4.5px" />
                  <Btn $w={26} $ml={1.5}><FontColorIcon /></Btn>
                  <Caret $m="0" />
                </Line>
              </Stack>
            </GroupBody>
            <GroupLabel $pr={16}>Font</GroupLabel>
            <Launch />
          </Group>

          <Group $w={264}>
            <GroupBody>
              <Stack>
                <Line>
                  <Btn><LinesIcon rows={[[1, 0, 14], [3, 0, 14], [5, 0, 14]]} /></Btn>
                  <Btn $on><LinesIcon rows={[[4, 0, 14], [6, 0, 14], [8, 0, 14]]} /></Btn>
                  <Btn><LinesIcon rows={[[8, 0, 14], [10, 0, 14], [12, 0, 14]]} /></Btn>
                  <VSep $l={4} $r={4} />
                  <Btn><OrientIcon /></Btn>
                  <Caret $m="0" />
                  <VSep $l={19} $r={7} />
                  <WideRow><WrapIcon />Wrap Text</WideRow>
                </Line>
                <Line>
                  <Btn><LinesIcon rows={[[2, 0, 14], [5, 0, 10], [8, 0, 14], [11, 0, 10]]} /></Btn>
                  <Btn $on><LinesIcon rows={[[2, 0, 14], [5, 2, 10], [8, 0, 14], [11, 2, 10]]} /></Btn>
                  <Btn><LinesIcon rows={[[2, 0, 14], [5, 4, 10], [8, 0, 14], [11, 4, 10]]} /></Btn>
                  <VSep $l={4} $r={4} />
                  <Btn><IndentIcon flip /></Btn>
                  <Btn><IndentIcon /></Btn>
                  <VSep $l={4} $r={7} />
                  <WideRow><MergeIcon />Merge &amp; Center<Caret $m="0 0 0 8px" /></WideRow>
                </Line>
              </Stack>
            </GroupBody>
            <GroupLabel $pr={14}>Alignment</GroupLabel>
            <Launch />
          </Group>

          <Group $w={140}>
            <GroupBody>
              <Stack>
                <Select $w={131}>General<Caret /></Select>
                <Line>
                  <Btn $w={24} $fs={15}>$</Btn>
                  <Caret $m="0 4px 0 0" />
                  <Btn $w={20} $fs={15}>%</Btn>
                  <Btn $w={22}>,</Btn>
                  <VSep $l={5} $r={2} />
                  <Btn $w={26} $fs={8} $lh="8px"><span>←.0<br />.00</span></Btn>
                  <Btn $w={22} $fs={8} $lh="8px"><span>.00<br />→.0</span></Btn>
                </Line>
              </Stack>
            </GroupBody>
            <GroupLabel $pr={12}>Number</GroupLabel>
            <Launch />
          </Group>

          <Group $w={182}>
            <GroupBody $pl={4}>
              <Big $w={72}><BigIcon><CondIcon /></BigIcon>Conditional<span>Formatting<Caret /></span></Big>
              <Big $w={56}><BigIcon><TableIcon /></BigIcon>Format as<span>Table<Caret /></span></Big>
              <Big $w={44}><BigIcon><TableIcon styleOnly /></BigIcon>Cell<span>Styles<Caret /></span></Big>
            </GroupBody>
            <GroupLabel>Styles</GroupLabel>
          </Group>

          <Group $w={135}>
            <GroupBody $pl={3}>
              <Big $w={42}><BigIcon><InsertIcon /></BigIcon>Insert<Caret $m="6px 0 0" /></Big>
              <Big $w={42}><BigIcon><DeleteIcon /></BigIcon>Delete<Caret $m="6px 0 0" /></Big>
              <Big $w={44}><BigIcon><FormatIcon /></BigIcon>Format<Caret $m="6px 0 0" /></Big>
            </GroupBody>
            <GroupLabel>Cells</GroupLabel>
          </Group>

          <Group $w={187}>
            <GroupBody>
              <Stack $gap={0} $pad="0 0 0 7px" $w={101}>
                <WideRow><SigmaIcon />AutoSum<Caret $m="0 0 0 9px" /></WideRow>
                <WideRow><FillDownIcon />Fill<Caret $m="0" /></WideRow>
                <WideRow><EraserIcon />Clear<Caret $m="0" /></WideRow>
              </Stack>
              <Big $w={36} $ls={-0.5}><BigIcon><SortIcon /></BigIcon>Sort &amp;<span>Filter<Caret $m="0 0 0 2px" /></span></Big>
              <Big $w={46} $ls={-0.5}><BigIcon><FaBinoculars size={27} color="#666" /></BigIcon>Find &amp;<span>Select<Caret $m="0 0 0 2px" /></span></Big>
            </GroupBody>
            <GroupLabel>Editing</GroupLabel>
          </Group>
          <Collapse><ChevronUp size={14} strokeWidth={3} /></Collapse>
        </Ribbon>

        <FormulaRow>
          <NameBox>B3<Caret /></NameBox>
          <BarDots><VDots /></BarDots>
          <FxBox>
            <Ico w={16} h={16}><path d="M2 2l12 12M14 2 2 14" stroke="#bbb" strokeWidth="2" /></Ico>
            <Ico w={18} h={16}><path d="M2 8l5 6L17 3" fill="none" stroke="#bbb" strokeWidth="3" /></Ico>
            <Fx>fx</Fx>
          </FxBox>
          <Input>1007<Ico w={12} h={8}><path d="M1 1l5 5 5-5" fill="none" stroke="#666" strokeWidth="2" /></Ico></Input>
        </FormulaRow>

        <SheetWrap>
          <SheetMain>
            <ColHead>
              <Corner />
              {cols.map(([c, w, on]) => <Col key={c} $w={w} $on={on}>{c}</Col>)}
            </ColHead>
            <SheetBody>
              <RowHead>
                {rows.map((h, i) => <RowNum key={i} $h={h} $on={i === 2}>{i + 1}</RowNum>)}
              </RowHead>
              <Canvas>
                <Dash>
                  <Band>
                    <Selector>
                      <SelLabel><N $o="center">SELECT CUSTOMER #</N></SelLabel>
                      <SelLabel><N $o="center">CUSTOMER NAME</N></SelLabel>
                      <SelValue $sel $fs={17.5}><N $o="center">1007</N></SelValue>
                      <SelValue $fs={17}><N $o="center">CELLISON</N></SelValue>
                      <DropBtn><Caret $m="0" /></DropBtn>
                      <Drop>
                        {[1006, 1007, 1008, 1009, 1010, 1011, 1012, 1013].map(n => <DropItem key={n} $on={n === 1007}>{n}</DropItem>)}
                        <DropBar><DropThumb /></DropBar>
                      </Drop>
                      <Ring />
                      <Pointer viewBox="0 0 15 22"><path d="M1 1v15l4-3 3 7 3-1-3-7h5z" fill="#fff" stroke="#111" /></Pointer>
                    </Selector>
                    <Strip>
                      <StripBtn $w={139}><N $o="center">Add Invoice Data</N></StripBtn>
                      <StripBtn $w={119}><N $o="center">Add Customer Data</N></StripBtn>
                      <StripBtn $w={168}><N $o="center">How To Use This Dashboard</N></StripBtn>
                    </Strip>
                  </Band>

                  <Page>
                    <LeftPanel $w={300} $h={308} $m="6px 0 0">
                      <Card $w={267} $h={140} $pt={11}>
                        <Callout $h={26} $l={16} $r={6} $fs={12.5}><N>CUSTOMER CONTACT INFORMATION</N></Callout>
                        <Fields>
                          {fields.map(([l, v, fs]) => (
                            <Field key={l}><FieldLabel><N $o="right">{l}</N></FieldLabel><FieldValue $fs={fs}><N>{v}</N></FieldValue></Field>
                          ))}
                        </Fields>
                      </Card>
                      <Card $w={244} $h={94} $pt={4}>
                        <Callout $h={23} $l={14} $r={14} $fs={12} $pl={5}><N>CUSTOMER NOTES</N></Callout>
                        <NotesBox />
                      </Card>
                    </LeftPanel>

                    <RightPanel $w={812} $h={334} $m="5px 0 0 16px">
                      <KpiCol>
                        {kpis.map(k => (
                          <Card key={k.label} $w={110} $h={k.h} $pt={k.pt} $ml={k.ml}>
                            <Callout $h={k.ch} $l={k.l} $r={k.r} $fs={11} $fold={k.fold}><N>{k.label}</N></Callout>
                            <KpiValue $fs={k.fs} $pad={k.pad}><N $o="center">{k.value}</N></KpiValue>
                          </Card>
                        ))}
                      </KpiCol>
                      <Main $w={609} $h={302} $pt={10}>
                        <Callout $h={27} $l={9} $r={15} $fs={19} $pl={5}><N>DAYS PAST DUE INVOICE VALUE BY AGING GROUP</N></Callout>
                        <MainBody>
                          <DaysCol>
                            {days.map(([l, v, w]) => (
                              <DayRow key={l}>
                                <DayChip $w={w}><N>{l}</N></DayChip>
                                <DayVal><N>{v}</N></DayVal>
                              </DayRow>
                            ))}
                          </DaysCol>
                          <GrayPanel>
                            <Callout $h={48} $l={12} $r={14} $fs={15.5} $lh="17px">
                              <N>AGING GROUP WITH<br />GREATEST PAST DUE</N>
                            </Callout>
                            <GrayText>
                              <GrayLine $fs={26.5} $lh={30} $mt={3}><N $o="center">80%</N></GrayLine>
                              <GrayLine $fs={15} $lh={17} $mt={6.5}><N $o="center">OF THE VALUE OF PAST<br />DUE INVOICES</N></GrayLine>
                              <GrayLine $fs={15} $lh={17} $mt={11}><N $o="center">ARE</N></GrayLine>
                              <GrayLine $fs={28.5} $lh={30} $mt={5.5} $mr={4}><N $o="center">&gt; 91 DAYS</N></GrayLine>
                              <GrayLine $fs={15.5} $lh={17} $mt={8.5}><N $o="center">PAST DUE</N></GrayLine>
                            </GrayText>
                          </GrayPanel>
                          <Chart>
                            <ChartTitle><N $o="center">CELLISON PAST DUE INVOICE<br />DISTRIBUTION</N></ChartTitle>
                            <ChartBody>
                              <Legend>
                                {legend.map(([c, t]) => (
                                  <LegendItem key={t}><Swatch $c={c} /><N>{t}<br />DAYS</N></LegendItem>
                                ))}
                              </Legend>
                              <Pie viewBox="-70 -70 140 140">
                                <path d="M1 0 1 -65A65 65 0 0 1 42 -50z" fill="#ED7D31" stroke="#fff" strokeWidth="2" />
                                <path d="M1 0 42 -50A65 65 0 0 1 63 -20z" fill="#A5A5A5" stroke="#fff" strokeWidth="2" />
                                <path d="M0 0 62 -20A65 65 0 1 1 0 -65z" fill={AMBER} stroke="#fff" strokeWidth="2" />
                                <PieLabel transform="translate(10 -47) scale(.82 1)">11%</PieLabel>
                                <PieLabel transform="translate(40 -25) scale(.82 1)">9%</PieLabel>
                                <PieLabel transform="translate(-42 44) scale(.82 1)">80%</PieLabel>
                              </Pie>
                            </ChartBody>
                          </Chart>
                        </MainBody>
                      </Main>
                    </RightPanel>
                  </Page>

                  <Footer>
                    <FootAmber>
                      <BeLogo>be</BeLogo>
                      <FootText><N>dashboards</N></FootText>
                    </FootAmber>
                  </Footer>
                </Dash>
              </Canvas>
            </SheetBody>
          </SheetMain>
          <VScroll>
            <ScrollBtn><Tri $dir="up" /></ScrollBtn>
            <ScrollThumb />
            <ScrollRest />
            <ScrollBtn><Tri $dir="down" /></ScrollBtn>
          </VScroll>
        </SheetWrap>

        <TabBar>
          <TabNav><Tri $dir="left" /><Tri $dir="right" /></TabNav>
          <ActiveTab><ActiveInner>CUSTOMER AR DASHBOARD</ActiveInner></ActiveTab>
          <SheetTabs>
            <SheetTab $w={139} $bg="#C55A11" $fg="#fff">D-CUSTOMER INFO</SheetTab>
            <SheetTab $w={215} $bg="#C55A11" $fg="#fff">D-CUSTOMER INVOICE DETAILS</SheetTab>
            <SheetTab $w={186} $bg="#A5A5A5" $fg="#222">HOW TO USE DASHBOARD</SheetTab>
            <SheetTab $w={108} $bg={AMBER} $fg="#222" $pl={12}>A - CALCULATIONS</SheetTab>
          </SheetTabs>
          <TabTail>
            <More>...</More>
            <Plus>+</Plus>
            <TabDots><VDots /></TabDots>
            <HScroll>
              <HBtn><Tri $dir="left" /></HBtn>
              <HThumb />
              <HRest />
              <HBtn><Tri $dir="right" /></HBtn>
            </HScroll>
          </TabTail>
        </TabBar>

        <Status>
          READY
          <Macro viewBox="0 0 14 14"><circle cx="4" cy="3" r="3" fill="#fff" /><rect x="1.5" y="5.5" width="12" height="8" fill="none" stroke="#fff" /><path d="M3 8h9M3 10.500h9M6 6v7M9 6v7" stroke="#fff" /></Macro>
          <StatusRight>
            <ViewBtn $on><Ico w={14} h={14}><rect x=".5" y=".5" width="13" height="13" fill="none" stroke="#fff" /><path d="M5 0v14M9.500 0v14M0 5h14M0 9.500h14" stroke="#fff" /></Ico></ViewBtn>
            <ViewBtn><Ico w={14} h={14}><rect x=".5" y=".5" width="13" height="13" fill="none" stroke="#fff" /><path d="M3.500 3.500h7v7h-7zM5 6h4M5 8h4" fill="none" stroke="#fff" /></Ico></ViewBtn>
            <ViewBtn><Ico w={14} h={14}><rect x=".5" y=".5" width="13" height="13" fill="none" stroke="#fff" /><path d="M1 1h5v6H1zM8 1h5v6H8z" fill="#fff" /></Ico></ViewBtn>
            <ZoomSign>-</ZoomSign>
            <Slider><SliderThumb /><SliderTick /></Slider>
            <ZoomSign>+</ZoomSign>
            <ZoomPct>58%</ZoomPct>
          </StatusRight>
        </Status>
      </Win>
    </>
  )
}
